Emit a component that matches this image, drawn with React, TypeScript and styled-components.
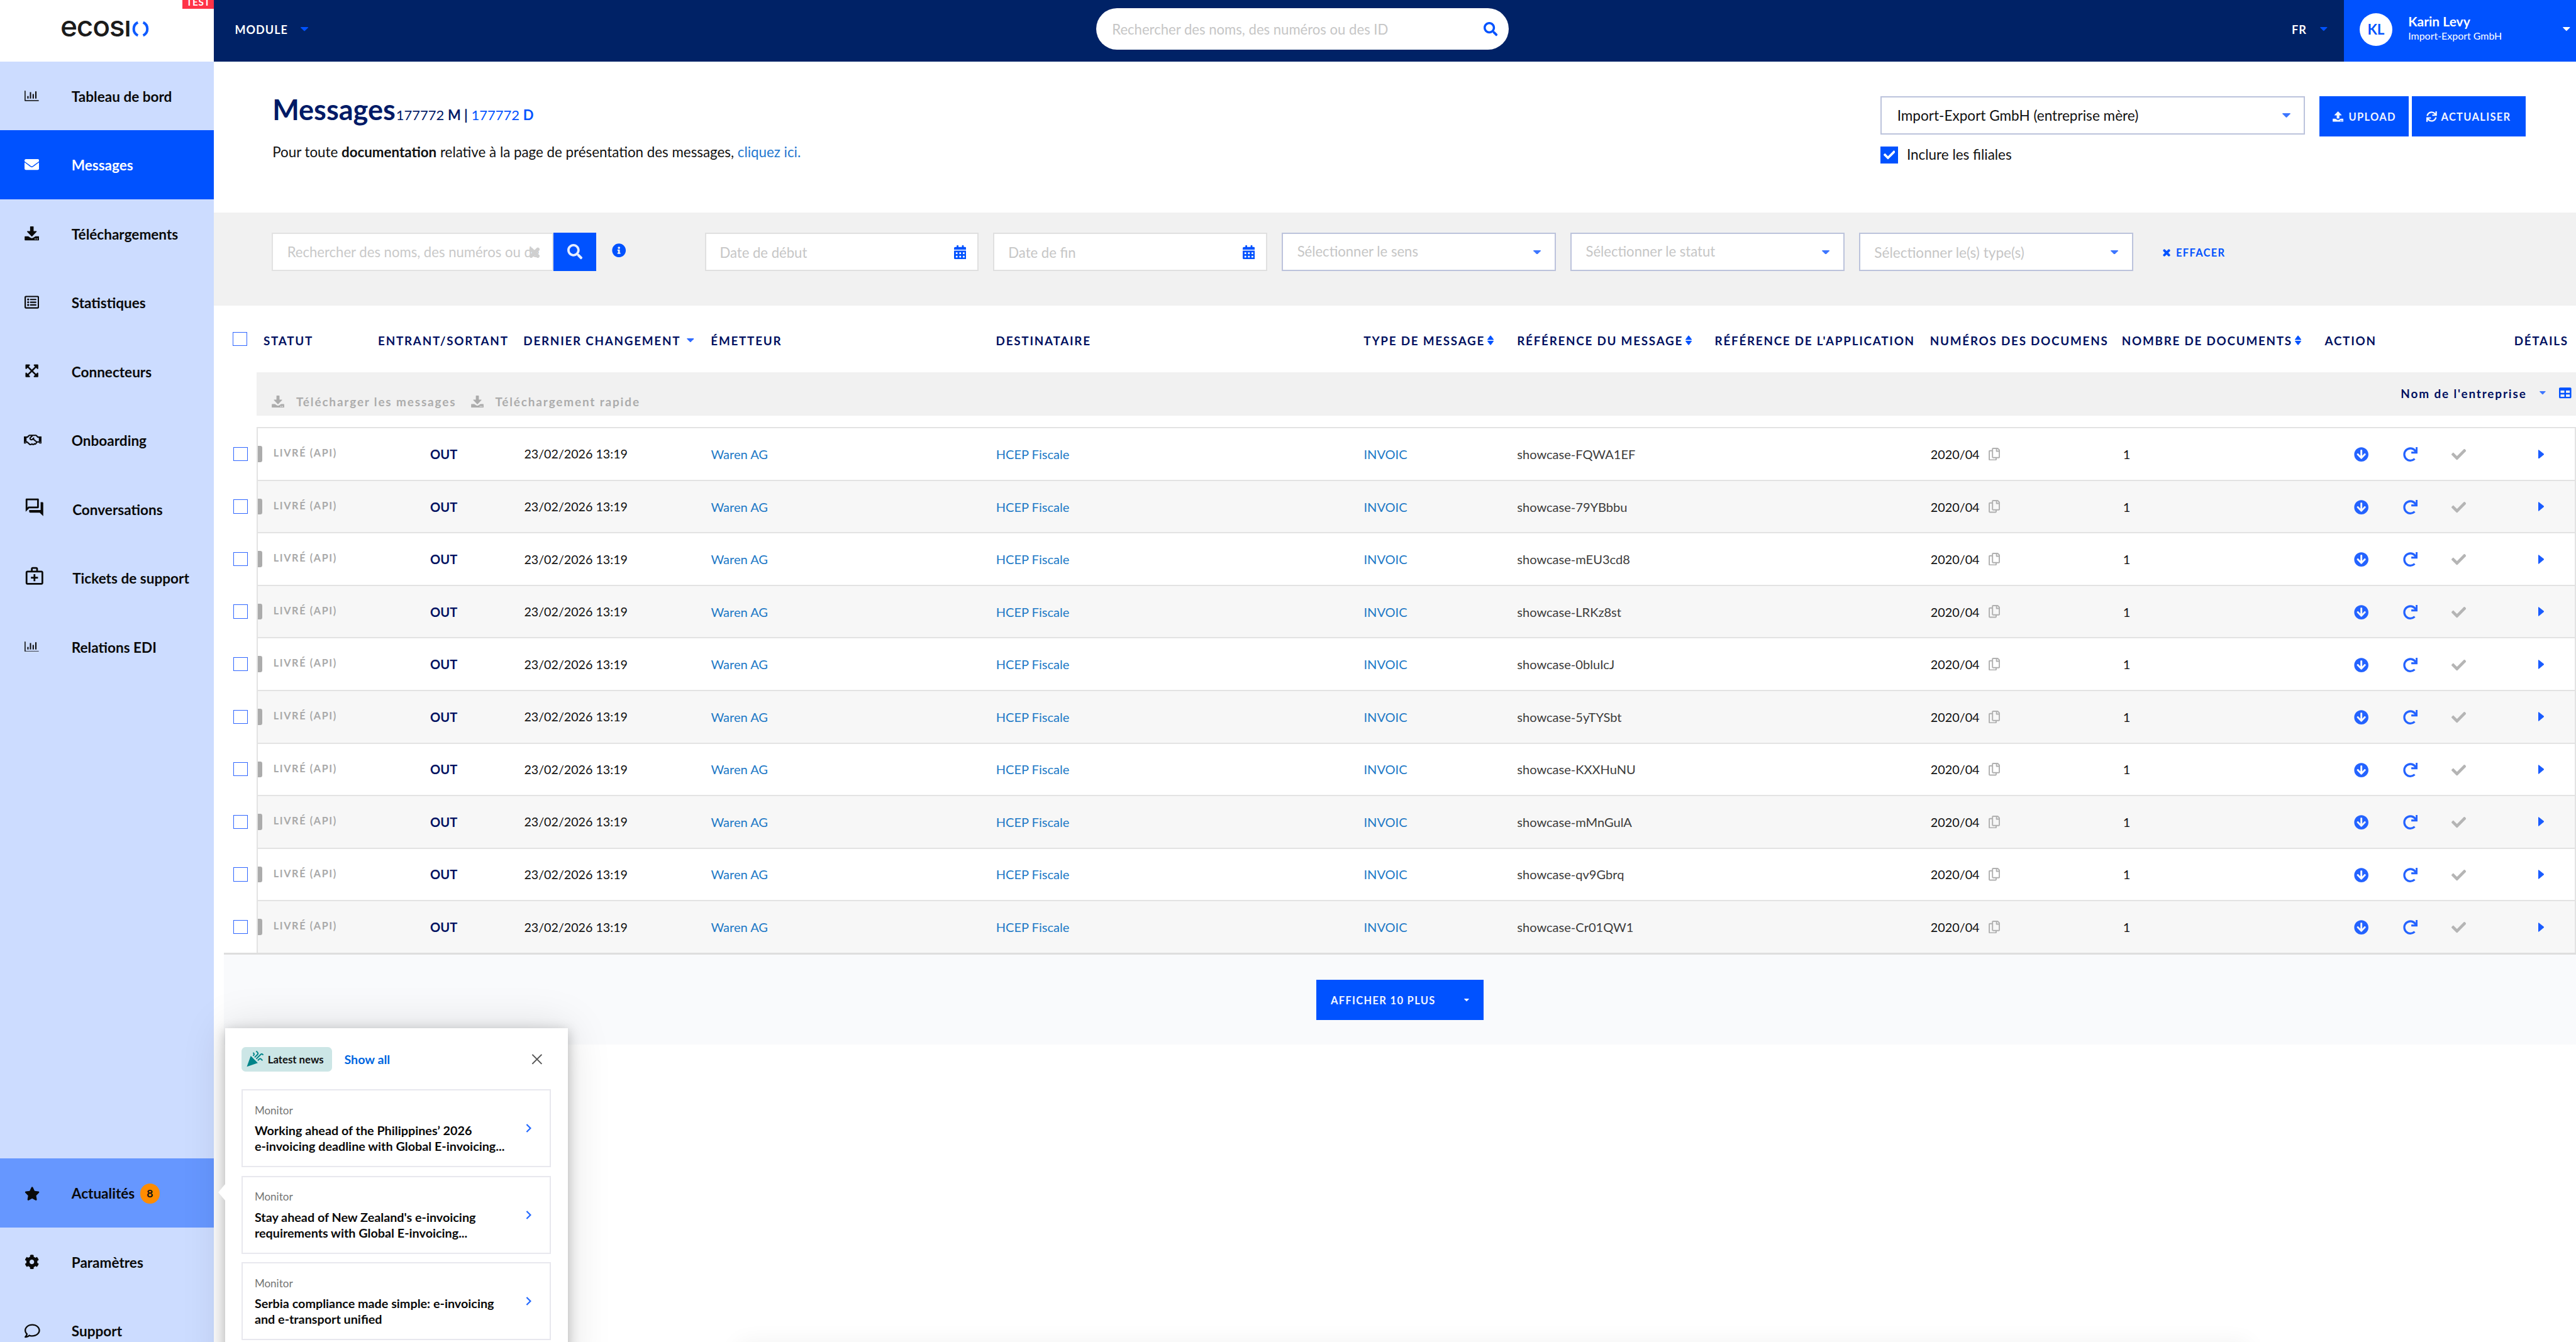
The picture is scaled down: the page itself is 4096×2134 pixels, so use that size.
import React from 'react';
import styled, { createGlobalStyle, css } from 'styled-components';
import {
  FaArrowCircleDown,
  FaCalendarAlt,
  FaCheck,
  FaCog,
  FaEnvelope,
  FaExpandArrowsAlt,
  FaInfoCircle,
  FaRedo,
  FaRegComment,
  FaRegCopy,
  FaRegHandshake,
  FaRegListAlt,
  FaSearch,
  FaStar,
  FaSync,
  FaTable,
} from 'react-icons/fa';
import { MdCelebration, MdOutlineForum, MdOutlineMedicalServices } from 'react-icons/md';

/* 1rem is ten design units; the root size scales the whole interface. */
const GlobalStyle = createGlobalStyle`
  html { font-size: 9.3265px; }
  body {
    margin: 0;
    background: #fff;
    color: #111;
    font-family: Lato, "Open Sans", "Liberation Sans", sans-serif;
    overflow: hidden;
  }
  *, *::before, *::after { box-sizing: border-box; }
  b { font-weight: 700; }
  svg { display: block; flex: none; }
`;

const blue = '#0052ff';
const navy = '#001060';
const strong = 700;

const Page = styled.div`
  position: relative;
  display: flex;
  width: 100vw;
  height: 100vh;
  overflow: hidden;
`;

/* ---------- Sidebar ---------- */

const Sidebar = styled.aside`
  flex: none;
  width: 36.5rem;
  height: 228.8rem;
  display: flex;
  flex-direction: column;
  background: #ccdcff;
`;

const LogoBox = styled.div`
  position: relative;
  flex: none;
  height: 10.5rem;
  padding: 0 0 0.7rem 10.3rem;
  display: flex;
  align-items: center;
  background: #fff;
`;

const LogoText = styled.span`
  width: 12.2rem;
  font: 500 4.95rem/6rem Inter, "Liberation Sans", sans-serif;
  letter-spacing: -0.14rem;
  color: #1b1b1b;
  transform: translateY(-0.45rem);
`;

const TestBadge = styled.span`
  position: absolute;
  top: 0;
  right: 0;
  width: 5.4rem;
  height: 1.5rem;
  overflow: hidden;
  background: #ff3347;
  color: #fff;
  font-size: 1.65rem;
  font-weight: 700;
  letter-spacing: 0.06rem;
  line-height: 0.8rem;
  text-align: center;
`;

const NavList = styled.nav`
  display: flex;
  flex-direction: column;
`;

const BottomNav = styled(NavList)`
  margin-top: 81.4rem;
`;

const NavItem = styled.a<{ $bg?: string; $light?: boolean }>`
  flex: none;
  height: 11.74rem;
  padding-top: 0.1rem;
  display: flex;
  align-items: center;
  background: ${(p) => p.$bg ?? 'transparent'};
  color: ${(p) => (p.$light ? '#fff' : '#0a0a0a')};
  font-size: 2.42rem;
  font-weight: ${strong};
`;

const NavIcon = styled.span<{ $wide?: boolean; $lift?: number }>`
  flex: none;
  width: ${(p) => (p.$wide ? '8.3rem' : '8rem')};
  margin-left: ${(p) => (p.$wide ? '4.05rem' : '4.2rem')};
  padding-bottom: ${(p) => p.$lift ?? 0}rem;
`;

const CountBadge = styled.span`
  width: 3.4rem;
  height: 3.4rem;
  margin-left: 0.9rem;
  border-radius: 50%;
  display: flex;
  align-items: center;
  justify-content: center;
  background: #ff8c00;
  font-size: 1.9rem;
  color: #111;
`;

/* ---------- Top bar ---------- */

const Main = styled.main`
  flex: 1;
  min-width: 0;
  display: flex;
  flex-direction: column;
`;

const TopBar = styled.header`
  flex: none;
  height: 10.5rem;
  display: flex;
  background: #002266;
  color: #fff;
`;

const ModuleMenu = styled.div`
  width: 150.4rem;
  padding: 0 0 0.5rem 3.55rem;
  display: flex;
  align-items: center;
  font-size: 1.93rem;
  font-weight: 700;
  letter-spacing: 0.11rem;
  gap: 2.1rem;
`;

const SearchPill = styled.div`
  width: 70.3rem;
  height: 7.1rem;
  margin-top: 1.4rem;
  padding: 0.1rem 1.9rem 0 2.7rem;
  border-radius: 3.55rem;
  display: flex;
  align-items: center;
  justify-content: space-between;
  background: #fff;
  color: #c6c6c6;
  font-size: 2.37rem;
`;

const LangMenu = styled.div`
  margin-left: auto;
  padding: 0 2.8rem 0.5rem 0;
  display: flex;
  align-items: center;
  gap: 2.25rem;
  font-size: 1.95rem;
  font-weight: 700;
  letter-spacing: 0.1rem;
`;

const UserMenu = styled.div`
  width: 39.6rem;
  padding: 0 1rem 0.5rem 2.7rem;
  display: flex;
  align-items: center;
  background: ${blue};
`;

const Avatar = styled.span`
  flex: none;
  width: 5.6rem;
  height: 5.6rem;
  border-radius: 50%;
  display: flex;
  align-items: center;
  justify-content: center;
  background: #fff;
  color: ${blue};
  font-size: 2.4rem;
  font-weight: ${strong};
`;

const UserText = styled.div`
  flex: 1;
  padding: 0 0 0.1rem 2.7rem;
  display: flex;
  flex-direction: column;
`;

const UserName = styled.span`
  font-size: 2.25rem;
  font-weight: ${strong};
  line-height: 2.44rem;
`;

const UserCompany = styled.span`
  font-size: 1.71rem;
  line-height: 2.44rem;
`;

/* ---------- Title area ---------- */

const Hero = styled.section`
  flex: none;
  height: 25.7rem;
  padding: 0 8.6rem 0 9.95rem;
  display: flex;
  justify-content: space-between;
`;

const HeroText = styled.div`
  padding-top: 5.3rem;
`;

const TitleRow = styled.div`
  display: flex;
  align-items: baseline;
  color: #001a66;
`;

const Title = styled.h1`
  margin: 0;
  font-size: 4.83rem;
  font-weight: ${strong};
  line-height: 6rem;
`;

const Counts = styled.span`
  margin-left: 0.1rem;
  font-size: 2.36rem;
  line-height: 3rem;
`;

const BlueText = styled.span`
  color: ${blue};
`;

const Intro = styled.p`
  margin: 2.58rem 0 0;
  font-size: 2.395rem;
  line-height: 3.2rem;
`;

const Link = styled.a`
  color: #1f78d0;
`;

const HeroActions = styled.div`
  padding-top: 5.9rem;
`;

const ActionRow = styled.div`
  height: 6.9rem;
  display: flex;
  align-items: flex-start;
`;

const boxBase = css`
  height: 6.5rem;
  display: flex;
  align-items: center;
  justify-content: space-between;
  background: #fff;
  white-space: nowrap;
`;

const CompanySelect = styled.div`
  ${boxBase}
  width: 72.4rem;
  margin-right: 2.5rem;
  padding: 0.1rem 2.3rem 0 2.65rem;
  border: 2px solid #bcc3dc;
  font-size: 2.42rem;
`;

const PrimaryButton = styled.button<{ $width: number; $height?: number; $gap?: number }>`
  width: ${(p) => p.$width}rem;
  height: ${(p) => p.$height ?? 6.9}rem;
  margin: 0 0.5rem 0 0;
  padding: 0.1rem 0 0;
  border: 0;
  display: flex;
  align-items: center;
  justify-content: center;
  gap: ${(p) => p.$gap ?? 0.8}rem;
  background: ${blue};
  color: #f2f6ff;
  font-family: inherit;
  font-size: 1.77rem;
  font-weight: 700;
  letter-spacing: 0.14rem;
  &:last-child { margin-right: 0; }
`;

const IncludeRow = styled.label`
  margin-top: 1.6rem;
  display: flex;
  align-items: center;
  gap: 1.5rem;
  font-size: 2.41rem;
  line-height: 3.1rem;
`;

const CheckedBox = styled.span`
  width: 3rem;
  height: 2.9rem;
  display: flex;
  align-items: center;
  justify-content: center;
  background: ${blue};
  color: #fff;
`;

/* ---------- Filter bar ---------- */

const FilterBar = styled.section`
  flex: none;
  height: 15.9rem;
  padding: 3.5rem 0 0 9.85rem;
  display: flex;
  align-items: flex-start;
  background: #f1f1f1;
`;

const FilterInput = styled.div`
  ${boxBase}
  position: relative;
  width: 48rem;
  padding: 0.1rem 2.2rem 0 2.4rem;
  border: 2px solid #e2e2e2;
  color: #c9c9c9;
  font-size: 2.37rem;
`;

const Clipped = styled.span`
  flex: 1;
  overflow: hidden;
  line-height: 3.4rem;
`;

const ClearMark = styled.span`
  position: absolute;
  right: 2.1rem;
  top: 2.2rem;
  color: #cfcfcf;
`;

const SearchButton = styled.button`
  width: 7.35rem;
  height: 6.5rem;
  border: 0;
  padding: 0;
  display: flex;
  align-items: center;
  justify-content: center;
  background: ${blue};
  color: #e6eeff;
`;

const InfoMark = styled.span`
  width: 18.45rem;
  padding: 1.8rem 0 0 2.6rem;
  color: ${blue};
`;

const FieldGroup = styled.div`
  display: flex;
  gap: 2.5rem;
`;

const Field = styled.div<{ $select?: boolean; $lift?: boolean; $size?: number }>`
  ${boxBase}
  width: 46.7rem;
  padding: 0.1rem ${(p) => (p.$select ? 2.3 : 1.9)}rem 0 ${(p) => (p.$select ? 2.4 : 2.35)}rem;
  border: 2px solid ${(p) => (p.$select ? '#bcc3dc' : '#e0e0e0')};
  color: #c6c6c6;
  font-size: ${(p) => p.$size ?? 2.37}rem;
  & > span { padding-bottom: ${(p) => (p.$lift ? 0.4 : 0)}rem; }
`;

const ClearButton = styled.button`
  height: 6.8rem;
  margin-left: 5.1rem;
  padding: 0.1rem 0 0;
  border: 0;
  display: flex;
  align-items: center;
  gap: 0.95rem;
  background: none;
  color: ${blue};
  font-family: inherit;
  font-size: 1.77rem;
  font-weight: 700;
  letter-spacing: 0.14rem;
`;

/* ---------- Table ---------- */

const columns = css<{ $first: number }>`
  display: grid;
  grid-template-columns:
    ${(p) => p.$first}rem 24.8rem 31.95rem 48.6rem 62.7rem 26.15rem
    33.7rem 36.7rem 32.7rem 34.6rem 32.3rem 1fr;
`;

const HeadRow = styled.div`
  flex: none;
  height: 11.4rem;
  display: flex;
  align-items: center;
`;

const HeadCheck = styled.div`
  width: 7.25rem;
  padding-left: 3.2rem;
`;

const HeadCells = styled.div<{ $first: number }>`
  ${columns}
  flex: 1;
  padding-top: 0.45rem;
  color: ${navy};
  font-size: 2.02rem;
  font-weight: ${strong};
  letter-spacing: 0.188rem;
  white-space: nowrap;
`;

const HeadCell = styled.div<{ $indent?: number; $gap?: number }>`
  padding-left: ${(p) => p.$indent ?? 0}rem;
  display: flex;
  align-items: center;
  gap: ${(p) => p.$gap ?? 0.35}rem;
`;

const CheckBox = styled.span`
  display: block;
  width: 2.4rem;
  height: 2.4rem;
  border: 1.5px solid #2f66ff;
  background: #fff;
`;

const Toolbar = styled.div`
  flex: none;
  height: 7.35rem;
  margin: 0 0 1.98rem 7.25rem;
  padding: 0 0.8rem 0 2.6rem;
  display: flex;
  justify-content: space-between;
  background: #f1f1f1;
  font-size: 2.03rem;
  font-weight: ${strong};
  letter-spacing: 0.2rem;
`;

const ToolbarLeft = styled.div`
  padding-top: 2.6rem;
  display: flex;
  align-items: center;
  color: #acacac;
`;

const ToolLabel = styled.span`
  margin: 0 2.5rem 0 2rem;
`;

const ToolbarRight = styled.div`
  padding-bottom: 0.3rem;
  display: flex;
  align-items: center;
  color: ${navy};
`;

const Spacer = styled.span<{ $w: number }>`
  width: ${(p) => p.$w}rem;
`;

const Rows = styled.div`
  flex: none;
  margin-left: 1.7rem;
  border-bottom: 3px solid #dedede;
`;

const Row = styled.div`
  height: 8.96rem;
  display: flex;
`;

const RowCheck = styled.div`
  width: 5.55rem;
  padding: 0.2rem 0 0 1.6rem;
  display: flex;
  align-items: center;
`;

const RowCells = styled.div<{ $alt: boolean; $first: number }>`
  ${columns}
  flex: 1;
  border: 2px solid #e3e3e3;
  border-bottom: 0;
  background: ${(p) => (p.$alt ? '#f7f7f7' : '#fff')};
  font-size: 2.13rem;
  white-space: nowrap;
`;

const Cell = styled.div<{ $tone?: string; $indent?: number; $size?: number }>`
  padding-left: ${(p) => p.$indent ?? 0}rem;
  display: flex;
  align-items: center;
  color: ${(p) => p.$tone ?? '#111'};
  font-size: ${(p) => p.$size ?? 2.15}rem;
`;

const StatusCell = styled(Cell)`
  color: #a9a9a9;
  font-size: 1.74rem;
  font-weight: ${strong};
  letter-spacing: 0.175rem;
  & > span { padding-bottom: 0.5rem; }
`;

const StatusBar = styled.i`
  width: 0.8rem;
  height: 2.74rem;
  margin-right: 1.85rem;
  border-radius: 0 0.35rem 0.35rem 0;
  background: #acacac;
`;

const DirectionCell = styled(Cell)`
  justify-content: center;
  padding-right: 2.4rem;
  color: ${navy};
  font-weight: 700;
`;

const ActionCell = styled(Cell)`
  gap: 5.8rem;
  padding: 0.2rem 0 0 5rem;
  color: #2463ff;
`;

const MoreArea = styled.div`
  flex: none;
  height: 15.35rem;
  margin-left: 1.7rem;
  display: flex;
  align-items: flex-start;
  justify-content: center;
  padding-top: 4.35rem;
  background: #f9fafc;
`;

/* ---------- News popover ---------- */

const Popover = styled.section`
  position: absolute;
  left: 38.37rem;
  top: 175.36rem;
  width: 58.4rem;
  height: 60rem;
  padding: 3.14rem 2.85rem 0 2.78rem;
  background: #fff;
  box-shadow: 0 0.4rem 2rem rgba(0, 0, 0, 0.24), 0 0 7rem rgba(0, 0, 0, 0.13);
`;

const PopoverArrow = styled.i`
  position: absolute;
  left: -1.2rem;
  top: 26.5rem;
  border: 1.45rem solid transparent;
  border-left: 0;
  border-right: 1.25rem solid #fff;
`;

const PopoverHead = styled.div`
  height: 4.2rem;
  margin-bottom: 3.05rem;
  padding-right: 1.4rem;
  display: flex;
  align-items: center;
`;

const NewsTag = styled.span`
  height: 4.2rem;
  width: 15.5rem;
  padding-left: 0.7rem;
  border-radius: 0.7rem;
  display: flex;
  align-items: center;
  gap: 0.6rem;
  background: #cce6e6;
  color: #008489;
  font-size: 1.8rem;
  font-weight: ${strong};
  white-space: nowrap;
`;

const TagText = styled.span`
  color: #111;
`;

const ShowAll = styled.a`
  margin: 0 auto 0 2.05rem;
  color: #0066e0;
  font-size: 2.11rem;
  font-weight: ${strong};
`;

const NewsCard = styled.article`
  height: 13.28rem;
  margin-bottom: 1.45rem;
  padding: 0 3.1rem 0 2.05rem;
  border: 2px solid #e8e8ee;
  display: flex;
  align-items: center;
  justify-content: space-between;
  color: #1f66ff;
`;

const NewsText = styled.div`
  padding-top: 0.2rem;
`;

const NewsSource = styled.div`
  margin-bottom: 0.85rem;
  color: #757575;
  font-size: 1.83rem;
  line-height: 2.4rem;
`;

const NewsLine = styled.div`
  color: #0a0a0a;
  font-size: 2.12rem;
  font-weight: 700;
  line-height: 2.7rem;
  white-space: nowrap;
`;

const BottomShade = styled.div`
  position: absolute;
  left: 126rem;
  right: 56rem;
  bottom: -2rem;
  height: 1rem;
  box-shadow: 0 0 4rem rgba(0, 0, 0, 0.16);
`;

/* ---------- Drawn icons ---------- */

const rem = (n: number) => `${n}rem`;

const Caret = ({ w, color = blue }: { w: number; color?: string }) => (
  <svg style={{ width: rem(w), height: rem(w * 0.54) }} viewBox="0 0 26 14">
    <path d="M1.5 0h23q2 .6 .6 2.4L14.6 13q-1.6 1.4-3.2 0L.9 2.4Q-.5 .6 1.5 0z" fill={color} />
  </svg>
);

const CaretRight = () => (
  <svg style={{ width: '1rem', height: '1.6rem' }} viewBox="0 0 10 16">
    <path d="M.8 .3L9.6 7.3q.6 .7 0 1.4L.8 15.7q-.8 .2-.8-.7V1q0-.9 .8-.7z" fill="#1a5cff" />
  </svg>
);

const SortIcon = () => (
  <svg style={{ width: '1.3rem', height: '1.75rem' }} viewBox="0 0 25 34">
    <path d="M2 14L11 2q1.5-1.6 3 0l9 12q.5 1.4-1 1.4H3q-1.500 0-1-1.400zM2 20l9 12q1.500 1.600 3 0l9-12q.5-1.400-1-1.400H3q-1.500 0-1 1.400z" fill={blue} />
  </svg>
);

const LogoMark = () => (
  <svg style={{ width: '2.95rem', height: '2.8rem' }} viewBox="0 0 88 84">
    <path d="M29.500 8.500A37 37 0 0 0 29.500 75.500M56.500 8.500A37 37 0 0 1 56.500 75.500" fill="none" stroke="#0f5bff" strokeWidth="13" />
  </svg>
);

const ChartIcon = () => (
  <svg style={{ width: '2.45rem', height: '1.8rem' }} viewBox="0 0 73 54" fill="currentColor">
    <path d="M0 1.500q0-1.500 2.500-1.500T5 1.500V49h66.500q1.500 0 1.500 2.500t-1.500 2.500H2.500Q0 54 0 51.500zM14 28h6.500v13H14zM27 8h6.500v33H27zM41 18h6.500v23H41zM54.500 4H61v37h-6.500z" />
  </svg>
);

const TrayIcon = ({ w, up }: { w: number; up?: boolean }) => (
  <svg style={{ width: rem(w), height: rem(w * 0.973) }} viewBox="0 0 75 73" fill="currentColor">
    <path d={up ? 'M37.500 0L62 25q1 3-2 3H46.500v22h-18V28H15q-3 0-2-3z' : 'M28.500 2q0-2 2-2h14q2 0 2 2v22H60q3 0 2 3L39.500 51q-2 2-4 0L13 27q-1-3 2-3h13.500z'} />
    <path
      fillRule="evenodd"
      d="M3 51h16l13 7.500q5.500 3 11 0L56 51h16q2.500 0 2.500 2.500v16q0 2.500-2.500 2.500H3Q.5 72 .5 69.500v-16Q.5 51 3 51zM52 62h5v5h-5zM62 62h5v5h-5z"
    />
  </svg>
);

const ThickCross = ({ w }: { w: number }) => (
  <svg style={{ width: rem(w), height: rem(w) }} viewBox="0 0 20 20">
    <path d="M4 4l12 12M16 4L4 16" stroke="currentColor" strokeWidth="6.400" strokeLinecap="round" />
  </svg>
);

const ThinCross = () => (
  <svg style={{ width: '1.9rem', height: '1.8rem' }} viewBox="0 0 20 19">
    <path d="M1.500 1l17 17M18.500 1l-17 17" stroke="#555" strokeWidth="2.300" />
  </svg>
);

const Chevron = () => (
  <svg style={{ width: '0.95rem', height: '1.5rem' }} viewBox="0 0 19 30">
    <path d="M3 2l13 13L3 28" fill="none" stroke="currentColor" strokeWidth="4.600" />
  </svg>
);

const box = (w: number, h = w) => ({ width: rem(w), height: rem(h) });

/* ---------- Content ---------- */

const mainNav = [
  { label: 'Tableau de bord', icon: <ChartIcon /> },
  { label: 'Messages', icon: <FaEnvelope style={box(2.48)} />, active: true },
  { label: 'Téléchargements', icon: <TrayIcon w={2.5} /> },
  { label: 'Statistiques', icon: <FaRegListAlt style={box(2.48)} /> },
  { label: 'Connecteurs', icon: <FaExpandArrowsAlt style={box(2.5)} /> },
  { label: 'Onboarding', icon: <FaRegHandshake style={{ ...box(3, 2.5), marginLeft: '-0.1rem' }} /> },
  { label: 'Conversations', icon: <MdOutlineForum style={box(3.6)} />, wide: true },
  { label: 'Tickets de support', icon: <MdOutlineMedicalServices style={box(3.6)} />, wide: true },
  { label: 'Relations EDI', icon: <ChartIcon /> },
];

const references = [
  'showcase-FQWA1EF',
  'showcase-79YBbbu',
  'showcase-mEU3cd8',
  'showcase-LRKz8st',
  'showcase-0bluIcJ',
  'showcase-5yTYSbt',
  'showcase-KXXHuNU',
  'showcase-mMnGulA',
  'showcase-qv9Gbrq',
  'showcase-Cr01QW1',
];

const news = [
  ['Working ahead of the Philippines’ 2026', 'e-invoicing deadline with Global E-invoicing...'],
  ["Stay ahead of New Zealand's e-invoicing", 'requirements with Global E-invoicing...'],
  ['Serbia compliance made simple: e-invoicing', 'and e-transport unified'],
];

const linkTone = '#2179c6';

export default function App() {
  return (
    <Page>
      <GlobalStyle />
      <Sidebar>
        <LogoBox>
          <LogoText>ecosı</LogoText>
          <LogoMark />
          <TestBadge>TEST</TestBadge>
        </LogoBox>
        <NavList>
          {mainNav.map((n) => (
            <NavItem key={n.label} $bg={n.active ? blue : undefined} $light={n.active}>
              <NavIcon $wide={n.wide} $lift={n.wide ? 0.7 : 0.2}>{n.icon}</NavIcon>
              {n.label}
            </NavItem>
          ))}
        </NavList>
        <BottomNav>
          <NavItem $bg="#6697ff">
            <NavIcon><FaStar style={box(2.6)} /></NavIcon>
            Actualités
            <CountBadge>8</CountBadge>
          </NavItem>
          <NavItem>
            <NavIcon><FaCog style={box(2.5)} /></NavIcon>
            Paramètres
          </NavItem>
          <NavItem>
            <NavIcon><FaRegComment style={box(2.65)} /></NavIcon>
            Support
          </NavItem>
        </BottomNav>
      </Sidebar>

      <Main>
        <TopBar>
          <ModuleMenu>
            MODULE
            <Caret w={1.3} />
          </ModuleMenu>
          <SearchPill>
            Rechercher des noms, des numéros ou des ID
            <FaSearch style={box(2.4)} color={blue} />
          </SearchPill>
          <LangMenu>
            FR
            <Caret w={1.25} />
          </LangMenu>
          <UserMenu>
            <Avatar>KL</Avatar>
            <UserText>
              <UserName>Karin Levy</UserName>
              <UserCompany>Import-Export GmbH</UserCompany>
            </UserText>
            <Caret w={1.25} color="#fff" />
          </UserMenu>
        </TopBar>

        <Hero>
          <HeroText>
            <TitleRow>
              <Title>Messages</Title>
              <Counts>
                177772 <b>M |</b> <BlueText>177772 <b>D</b></BlueText>
              </Counts>
            </TitleRow>
            <Intro>
              Pour toute <b>documentation</b> relative à la page de présentation des messages, <Link>cliquez ici.</Link>
            </Intro>
          </HeroText>
          <HeroActions>
            <ActionRow>
              <CompanySelect>
                Import-Export GmbH (entreprise mère)
                <Caret w={1.4} color="#3d76ff" />
              </CompanySelect>
              <PrimaryButton $width={15.2} $gap={0.9}>
                <TrayIcon w={1.85} up />
                UPLOAD
              </PrimaryButton>
              <PrimaryButton $width={19.4} $gap={0.7}>
                <FaSync style={box(1.8)} />
                ACTUALISER
              </PrimaryButton>
            </ActionRow>
            <IncludeRow>
              <CheckedBox><FaCheck style={box(2)} /></CheckedBox>
              Inclure les filiales
            </IncludeRow>
          </HeroActions>
        </Hero>

        <FilterBar>
          <FilterInput>
            <Clipped>Rechercher des noms, des numéros ou des ID</Clipped>
            <ClearMark><ThickCross w={1.9} /></ClearMark>
          </FilterInput>
          <SearchButton><FaSearch style={box(2.6)} /></SearchButton>
          <InfoMark><FaInfoCircle style={box(2.4)} /></InfoMark>
          <FieldGroup>
            <Field><span>Date de début</span><FaCalendarAlt style={box(2.1, 2.4)} color={blue} /></Field>
            <Field><span>Date de fin</span><FaCalendarAlt style={box(2.1, 2.4)} color={blue} /></Field>
            <Field $select $lift><span>Sélectionner le sens</span><Caret w={1.3} color="#3d76ff" /></Field>
            <Field $select $lift><span>Sélectionner le statut</span><Caret w={1.3} color="#3d76ff" /></Field>
            <Field $select $size={2.42}><span>Sélectionner le(s) type(s)</span><Caret w={1.3} color="#3d76ff" /></Field>
          </FieldGroup>
          <ClearButton>
            <ThickCross w={1.3} />
            EFFACER
          </ClearButton>
        </FilterBar>

        <HeadRow>
          <HeadCheck><CheckBox /></HeadCheck>
          <HeadCells $first={20.7}>
            <HeadCell $indent={1.18}>STATUT</HeadCell>
            <HeadCell>ENTRANT/SORTANT</HeadCell>
            <HeadCell $gap={1}>DERNIER CHANGEMENT<Caret w={1.25} color="#2f6bff" /></HeadCell>
            <HeadCell>ÉMETTEUR</HeadCell>
            <HeadCell>DESTINATAIRE</HeadCell>
            <HeadCell>TYPE DE MESSAGE<SortIcon /></HeadCell>
            <HeadCell>RÉFÉRENCE DU MESSAGE<SortIcon /></HeadCell>
            <HeadCell>RÉFÉRENCE DE L'APPLICATION</HeadCell>
            <HeadCell>NUMÉROS DES DOCUMENS</HeadCell>
            <HeadCell>NOMBRE DE DOCUMENTS<SortIcon /></HeadCell>
            <HeadCell>ACTION</HeadCell>
            <HeadCell>DÉTAILS</HeadCell>
          </HeadCells>
        </HeadRow>

        <Toolbar>
          <ToolbarLeft>
            <TrayIcon w={2.15} />
            <ToolLabel>Télécharger les messages</ToolLabel>
            <TrayIcon w={2.15} />
            <ToolLabel>Téléchargement rapide</ToolLabel>
          </ToolbarLeft>
          <ToolbarRight>
            Nom de l'entreprise
            <Spacer $w={2.2} />
            <Caret w={1.05} color="#3d76ff" />
            <Spacer $w={2.25} />
            <FaTable style={box(2.1)} color={blue} />
          </ToolbarRight>
        </Toolbar>

        <Rows>
          {references.map((reference, i) => (
            <Row key={reference}>
              <RowCheck><CheckBox /></RowCheck>
              <RowCells $alt={i % 2 === 1} $first={20.5}>
                <StatusCell><StatusBar /><span>LIVRÉ (API)</span></StatusCell>
                <DirectionCell>OUT</DirectionCell>
                <Cell $size={2.11} $indent={0.1}>23/02/2026 13:19</Cell>
                <Cell $tone={linkTone}>Waren AG</Cell>
                <Cell $tone={linkTone}>HCEP Fiscale</Cell>
                <Cell $tone={linkTone}>INVOIC</Cell>
                <Cell $tone="#3c3c3c">{reference}</Cell>
                <Cell />
                <Cell $size={2.12} $indent={0.1}>
                  2020/04
                  <Spacer $w={1.55} />
                  <FaRegCopy style={box(1.95, 2.2)} color="#b0b0b0" />
                </Cell>
                <Cell $indent={0.2}>1</Cell>
                <ActionCell>
                  <FaArrowCircleDown style={box(2.5)} />
                  <FaRedo style={box(2.5)} />
                  <FaCheck style={box(2.5)} color="#b5b5b5" />
                </ActionCell>
                <Cell $indent={4.05}><CaretRight /></Cell>
              </RowCells>
            </Row>
          ))}
        </Rows>
        <MoreArea>
          <PrimaryButton $width={28.55} $height={6.8} $gap={4.9}>
            AFFICHER 10 PLUS
            <Caret w={0.85} color="#f2f6ff" />
          </PrimaryButton>
        </MoreArea>
      </Main>

      <BottomShade />
      <Popover>
        <PopoverArrow />
        <PopoverHead>
          <NewsTag>
            <MdCelebration style={box(3.2)} />
            <TagText>Latest news</TagText>
          </NewsTag>
          <ShowAll>Show all</ShowAll>
          <ThinCross />
        </PopoverHead>
        {news.map(([first, second]) => (
          <NewsCard key={first}>
            <NewsText>
              <NewsSource>Monitor</NewsSource>
              <NewsLine>{first}</NewsLine>
              <NewsLine>{second}</NewsLine>
            </NewsText>
            <Chevron />
          </NewsCard>
        ))}
      </Popover>
    </Page>
  );
}
